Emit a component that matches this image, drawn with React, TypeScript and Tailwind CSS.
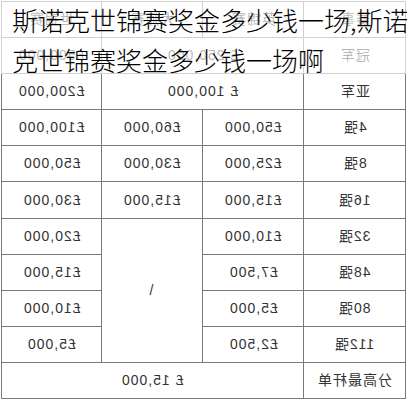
import React from "react";

const M = ({ children }: { children: React.ReactNode }) => (
  <span className="inline-block [transform:scaleX(-1)] whitespace-nowrap">{children}</span>
);

const Cell = ({
  children,
  className = "",
}: {
  children?: React.ReactNode;
  className?: string;
}) => (
  <div
    className={
      "bg-white flex items-center justify-center text-[14px] tracking-[1px] text-[#333] " +
      className
    }
  >
    {children}
  </div>
);

export default function App() {
  return (
    <div
      className="relative w-[407px] h-[400px] bg-white overflow-hidden"
      style={{ fontFamily: '"Liberation Sans", "Noto Sans CJK SC", sans-serif' }}
    >
      <div className="pt-[1px] pl-[1px]">
        <div className="grid w-[405px] grid-cols-[99px_100px_100px_101px] grid-rows-[35px_35px_35px_35px_35px_36px_35px_35px_35px_35px_35px] gap-[1px] p-[1px] bg-[#7a7a7a]">
          <Cell><M>世锦赛</M></Cell>
          <Cell><M>大师赛</M></Cell>
          <Cell><M>英锦赛</M></Cell>
          <Cell><M>赛事</M></Cell>

          <Cell><M>£500,000</M></Cell>
          <Cell className="col-span-2"><M>£ 250,000</M></Cell>
          <Cell><M>冠军</M></Cell>

          <Cell><M>£200,000</M></Cell>
          <Cell className="col-span-2"><M>£ 100,000</M></Cell>
          <Cell><M>亚军</M></Cell>

          <Cell><M>£100,000</M></Cell>
          <Cell><M>£60,000</M></Cell>
          <Cell><M>£50,000</M></Cell>
          <Cell><M>4强</M></Cell>

          <Cell><M>£50,000</M></Cell>
          <Cell><M>£30,000</M></Cell>
          <Cell><M>£25,000</M></Cell>
          <Cell><M>8强</M></Cell>

          <Cell><M>£30,000</M></Cell>
          <Cell><M>£15,000</M></Cell>
          <Cell><M>£15,000</M></Cell>
          <Cell><M>16强</M></Cell>

          <Cell><M>£20,000</M></Cell>
          <Cell className="row-span-4">/</Cell>
          <Cell><M>£10,000</M></Cell>
          <Cell><M>32强</M></Cell>

          <Cell><M>£15,000</M></Cell>
          <Cell><M>£7,500</M></Cell>
          <Cell><M>48强</M></Cell>

          <Cell><M>£10,000</M></Cell>
          <Cell><M>£5,000</M></Cell>
          <Cell><M>80强</M></Cell>

          <Cell><M>£5,000</M></Cell>
          <Cell><M>£2,500</M></Cell>
          <Cell><M>112强</M></Cell>

          <Cell className="col-span-3"><M>£ 15,000</M></Cell>
          <Cell><M>分高最杆单</M></Cell>
        </div>
      </div>

      <div
        className="absolute left-0 top-0 w-[407px] h-[74px] bg-white/65 pl-[12px] text-[26px] leading-[40px] font-light text-black whitespace-nowrap"
        style={{ fontFamily: '"Noto Sans CJK SC", sans-serif' }}
      >
        <div>斯诺克世锦赛奖金多少钱一场,斯诺</div>
        <div>克世锦赛奖金多少钱一场啊</div>
      </div>
    </div>
  );
}
